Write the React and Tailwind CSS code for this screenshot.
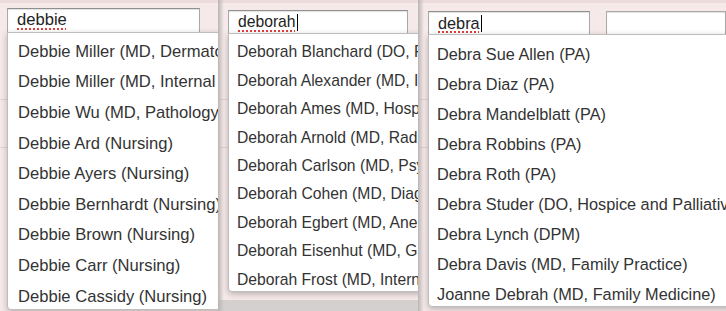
import React from 'react';

const panels = [
  {
    query: 'debbie',
    caret: false,
    width: 'w-[218px]',
    inputBox: 'ml-[7px] mt-[8px] w-[193px] h-[25px]',
    listBox: 'ml-[7px] w-[240px] h-[278px]',
    rowClass: 'h-[30.6px] text-[16.6px] pl-[10px]',
    listPad: 'pt-[4px]',
    textSize: 'text-[16.6px]',
    items: [
      'Debbie Miller (MD, Dermatology)',
      'Debbie Miller (MD, Internal Medicine)',
      'Debbie Wu (MD, Pathology)',
      'Debbie Ard (Nursing)',
      'Debbie Ayers (Nursing)',
      'Debbie Bernhardt (Nursing)',
      'Debbie Brown (Nursing)',
      'Debbie Carr (Nursing)',
      'Debbie Cassidy (Nursing)',
    ],
  },
  {
    query: 'deborah',
    caret: true,
    width: 'w-[200px]',
    inputBox: 'ml-[10px] mt-[10px] w-[180px] h-[24px]',
    listBox: 'ml-[10px] w-[220px] h-[259px]',
    rowClass: 'h-[28.4px] text-[15.7px] pl-[8px]',
    listPad: 'pt-[4px]',
    textSize: 'text-[15.7px]',
    bottomStrip: true,
    items: [
      'Deborah Blanchard (DO, Family Medicine)',
      'Deborah Alexander (MD, Internal Medicine)',
      'Deborah Ames (MD, Hospital Medicine)',
      'Deborah Arnold (MD, Radiology)',
      'Deborah Carlson (MD, Psychiatry)',
      'Deborah Cohen (MD, Diagnostic Radiology)',
      'Deborah Egbert (MD, Anesthesiology)',
      'Deborah Eisenhut (MD, Gastroenterology)',
      'Deborah Frost (MD, Internal Medicine)',
    ],
  },
  {
    query: 'debra',
    caret: true,
    width: 'w-[308px]',
    inputBox: 'ml-[10px] mt-[11px] w-[188px] h-[24px]',
    listBox: 'ml-[10px] w-[320px] h-[273px]',
    rowClass: 'h-[30px] text-[16.3px] pl-[8px]',
    listPad: 'pt-[4px]',
    textSize: 'text-[16.3px]',
    extraInput: true,
    items: [
      'Debra Sue Allen (PA)',
      'Debra Diaz (PA)',
      'Debra Mandelblatt (PA)',
      'Debra Robbins (PA)',
      'Debra Roth (PA)',
      'Debra Studer (DO, Hospice and Palliative Medicine)',
      'Debra Lynch (DPM)',
      'Debra Davis (MD, Family Practice)',
      'Joanne Debrah (MD, Family Medicine)',
    ],
  },
];

const Panel = ({ p, index }) => (
  <div className={`relative ${p.width} h-full shrink-0 overflow-hidden bg-[#f6e9e9]`}>
    {/* table grid behind the popup */}
    <div className="absolute inset-x-0 top-[99px] h-px bg-[#e6d2d2]" />
    <div className="absolute inset-x-0 top-[147px] h-px bg-[#e6d2d2]" />
    <div className="absolute inset-x-0 top-0 h-[3px] bg-[#ecdcdc]" />
    {p.bottomStrip && <div className="absolute inset-x-0 bottom-0 h-[11px] bg-[#d4d0d0]" />}
    {index > 0 && (
      <div className="absolute left-0 top-0 bottom-0 w-[6px] z-20 bg-gradient-to-r from-[#b9b5b5] to-transparent" />
    )}

    <div className="relative flex items-start">
      <div
        className={`${p.inputBox} bg-white border border-[#a9a9a9] border-t-[#8f8f8f] shadow-[inset_0_1px_1px_rgba(0,0,0,0.12)] flex items-center pl-[9px] ${p.textSize} text-[#222]`}
      >
        <span className="underline decoration-dotted decoration-[#e0403c] decoration-2 underline-offset-[3px]">
          {p.query}
        </span>
        {p.caret && <span className="ml-px w-px h-[17px] bg-black" />}
      </div>
      {p.extraInput && (
        <div className="ml-[16px] mt-[11px] w-[120px] h-[24px] shrink-0 bg-white border border-[#a9a9a9] shadow-[inset_0_1px_1px_rgba(0,0,0,0.12)]" />
      )}
    </div>

    <div
      className={`relative z-10 ${p.listBox} -mt-px bg-white border border-[#bdbdbd] rounded-b-[4px] shadow-[0_2px_6px_rgba(0,0,0,0.25)] ${p.listPad} overflow-hidden`}
    >
      {p.items.map((name) => (
        <div key={name} className={`${p.rowClass} flex items-center whitespace-nowrap text-[#333]`}>
          {name}
        </div>
      ))}
    </div>
  </div>
);

export default function App() {
  return (
    <div className="flex w-[726px] h-[311px] overflow-hidden font-['Liberation_Sans',Arial,sans-serif] bg-[#f6e9e9]">
      {panels.map((p, i) => (
        <Panel key={p.query} p={p} index={i} />
      ))}
    </div>
  );
}
